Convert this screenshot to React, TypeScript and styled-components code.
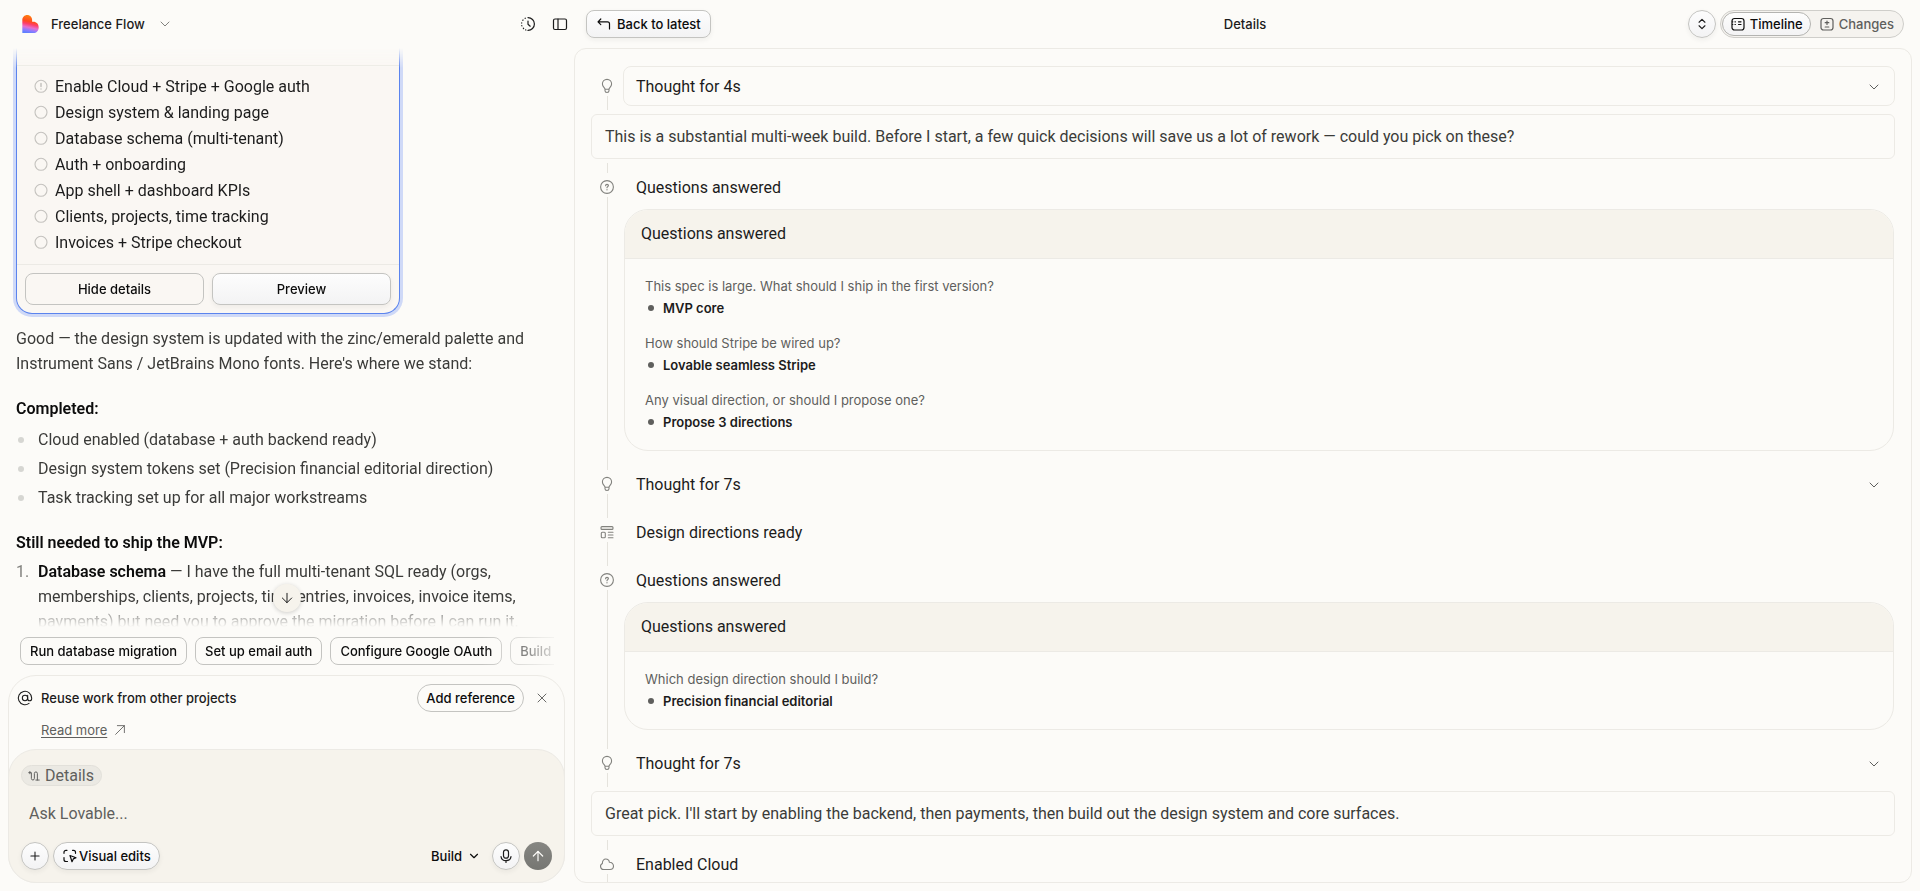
import React from "react";
import styled, { createGlobalStyle, css } from "styled-components";
import { ArrowDown, ArrowUp, AtSign, ChevronDown, ChevronsUpDown, Plus, X } from "lucide-react";

const color = {
  page: "#fcfbf8",
  sand: "#f6f3ec",
  card: "#faf7f3",
  ink: "#1c1c1c",
  body: "#3b3b39",
  muted: "#5f5f5d",
  icon: "#82827e",
  line: "#eceae5",
  edge: "#c4c4c1",
};

const bodyFont = `Roboto, "Liberation Sans", sans-serif`;
const uiFont = `Inter, "Liberation Sans", sans-serif`;

const GlobalStyle = createGlobalStyle`
  *, *::before, *::after { box-sizing: border-box; }
  body { margin: 0; background: ${color.page}; color: ${color.ink}; font: 400 16px/24px ${bodyFont}; }
  button, textarea { margin: 0; padding: 0; border: 0; background: none; color: inherit; font: inherit; }
  button { cursor: pointer; }
  h1, h2, h3, p, ul, ol { margin: 0; padding: 0; font: inherit; list-style: none; }
  svg { display: block; flex: none; }
`;

const Shell = styled.div`
  display: flex;
  height: 100vh;
  overflow: hidden;
`;

/* ---------- shared controls ---------- */

const uiText = css`
  font: 500 13px/20px ${uiFont};
  color: #0c0c0c;
  white-space: nowrap;
`;

const raised = css`
  background: linear-gradient(#fdfdfd, #f3f3f4);
  border: 1px solid ${color.edge};
  box-shadow: 0 2px 5px rgba(28, 28, 28, 0.06);
`;

const Button = styled.button<{ $raised?: boolean; $round?: boolean; $pad?: number; $gap?: number }>`
  ${uiText}
  display: flex;
  flex: none;
  align-items: center;
  justify-content: center;
  gap: ${(p) => p.$gap ?? 5}px;
  height: 28px;
  padding: 0 ${(p) => p.$pad ?? 9}px;
  border: 1px solid ${color.edge};
  border-radius: ${(p) => (p.$round ? 14 : 8)}px;
  ${(p) => p.$raised && raised}
`;

const RoundButton = styled.button<{ $tone?: "raised" | "dark" | "plain" }>`
  display: flex;
  flex: none;
  align-items: center;
  justify-content: center;
  width: 28px;
  height: 28px;
  border-radius: 50%;
  ${(p) => (!p.$tone || p.$tone === "raised") && raised}
  ${(p) => p.$tone === "dark" && "background: linear-gradient(#868682, #767672); color: #fcfbf8;"}
`;

const IconButton = styled.button`
  display: flex;
`;

/* ---------- icons ---------- */

type IconProps = { size?: number; width?: number; children: React.ReactNode };
const Icon = ({ size = 16, width = 1, children }: IconProps) => (
  <svg width={size} height={size} viewBox="0 0 16 16" fill="none" stroke="currentColor" strokeWidth={width} strokeLinecap="round" strokeLinejoin="round" aria-hidden="true">
    {children}
  </svg>
);

const Logo = () => (
  <svg width="17" height="18" viewBox="0 0 50 55" aria-hidden="true">
    <defs>
      <linearGradient id="logo-base" x1="0.6" y1="0" x2="0.4" y2="1">
        <stop offset="0" stopColor="#ff8a0c" />
        <stop offset="0.38" stopColor="#ff4a22" />
        <stop offset="0.52" stopColor="#fd3f6a" />
        <stop offset="0.7" stopColor="#e56fd0" />
        <stop offset="0.86" stopColor="#8f7bff" />
        <stop offset="1" stopColor="#5f80ff" />
      </linearGradient>
    </defs>
    <path fill="url(#logo-base)" d="M15 0c8.500 0 15 6.500 15 15v6h4c9 0 16 7 16 17s-7 17-16 17H0V15C0 6.500 6.500 0 15 0z" />
  </svg>
);

const HistoryIcon = () => (
  <Icon width={1.2}>
    <path d="M8 1.600a6.400 6.400 0 0 1 0 12.800" />
    <path d="M5.400 2.200l-.3.100M3 4l-.2.300M1.700 6.800v.3M1.800 9.600l.1.300M3.300 12.200l.3.300M5.600 13.900l.3.100" />
    <path d="M8 5v3.200l2.200 2" />
  </Icon>
);
const SidebarIcon = () => (
  <Icon width={1.2}>
    <rect x="1.500" y="3" width="13" height="10.500" rx="1.500" />
    <path d="M6 3v10.500" />
  </Icon>
);
const BackIcon = () => (
  <Icon width={1.200}>
    <path d="M4.800 3L2 5.800l2.800 2.800M2 5.800h9.500c1.400 0 2 .8 2 2V13" />
  </Icon>
);
const TimelineIcon = () => (
  <Icon width={1.200}>
    <rect x="2" y="2.500" width="12" height="11.500" rx="2.500" />
    <path d="M5 5.800h.4M5 8.500h.4M8.500 5.800H11M8.500 8.500H11M2.500 5.800h.3M2.500 8.500h.3" />
  </Icon>
);
const ChangesIcon = () => (
  <Icon width={1.200}>
    <rect x="2" y="2.500" width="12" height="11.500" rx="2.500" />
    <path d="M8 5v3.500M6.200 6.700h3.600M6.200 11h3.600" />
  </Icon>
);
const TaskIcon = ({ alert }: { alert?: boolean }) => (
  <Icon width={1.100}>
    <circle cx="8" cy="8.300" r="6" />
    {alert && <path d="M8 5.400v3.200M8 10.900v.2" strokeWidth="1.500" />}
  </Icon>
);
const BulbIcon = () => (
  <Icon width={1.100}>
    <path d="M6 11.200c0-1.200-2.600-2.300-2.600-5.200a4.600 4.600 0 0 1 9.200 0c0 2.900-2.600 4-2.600 5.200zM6 11.200v1.600c0 1 .8 1.700 2 1.700s2-.7 2-1.700v-1.600" />
  </Icon>
);
const QuestionIcon = () => (
  <Icon width={1.100}>
    <circle cx="8" cy="8" r="6.400" />
    <path d="M6.600 6.700c0-.8.6-1.400 1.400-1.400s1.400.5 1.400 1.300c0 1-1.400 1.100-1.400 2.100M8 10.700v.1" strokeWidth="1.200" />
  </Icon>
);
const LayoutIcon = () => (
  <Icon width={1.100}>
    <rect x="2" y="2.500" width="12" height="3" rx="1" fill="#dcdbd7" />
    <rect x="2.300" y="8.200" width="4" height="5.600" rx="1" />
    <path d="M9.300 8.200H14M9.300 11H14M9.300 13.800H14" />
  </Icon>
);
const CloudIcon = () => (
  <Icon width={1.100}>
    <path d="M4.800 13.500a3.200 3.200 0 0 1-1.400-6.100C3.300 4.800 4.800 3 6.800 3c1.900 0 3.300 1.200 3.600 3.300 2.400-.1 4.100 1.600 4.100 3.700 0 2-1.500 3.500-3.500 3.500z" />
  </Icon>
);
const RouteIcon = () => (
  <Icon size={12} width={1.300}>
    <path d="M1 3.500h3.500v7.800a2 2 0 0 0 4 0V4.600a2 2 0 0 1 4 0v8.800M10.500 13.400H15M2.500 2v3" />
  </Icon>
);
const VisualIcon = () => (
  <Icon width={1.200}>
    <path d="M5 2.300H4A2 2 0 0 0 2 4.300v1M10.500 2.300h1a2 2 0 0 1 2 2v1M2 9.500v2a2 2 0 0 0 2 2h1.500" />
    <path d="M8 7.500l6 2.200-2.700 1.200L10 13.700z" />
  </Icon>
);
const MicIcon = () => (
  <Icon width={1.200}>
    <rect x="5.500" y="1.800" width="5" height="8.400" rx="2.500" />
    <path d="M3 8.500c.3 2.500 2.300 4.200 5 4.200s4.700-1.700 5-4.200M8 12.700v1.800" />
  </Icon>
);
const OutIcon = () => (
  <Icon size={14}>
    <path d="M3 13L13 3M5 3h8v8" />
  </Icon>
);

/* ---------- left: chat ---------- */

const ChatColumn = styled.section`
  display: flex;
  flex-direction: column;
  flex: 0 0 574px;
  min-width: 0;
`;

const ChatHeader = styled.header`
  display: flex;
  align-items: center;
  justify-content: space-between;
  flex: none;
  height: 48px;
  padding: 0 6px 0 22px;
`;

const ProjectButton = styled.button`
  ${uiText}
  display: flex;
  align-items: center;
  gap: 12px;
  color: ${color.ink};
  svg:last-child { color: ${color.icon}; }
`;

const HeaderTools = styled.div`
  display: flex;
  gap: 16px;
`;

const ChatBody = styled.div`
  position: relative;
  flex: 1;
  min-height: 0;
`;

const ChatScroll = styled.div`
  height: 100%;
  padding: 0 16px;
  overflow: hidden;
  color: ${color.body};
  line-height: 25px;
  mask-image: linear-gradient(transparent, #000 20px, #000 calc(100% - 26px), transparent);
`;

const ScrollDown = styled.div`
  position: absolute;
  bottom: 15px;
  left: 50%;
  transform: translateX(-50%);
  button {
    background: ${color.sand};
    box-shadow: 0 1px 4px rgba(28, 28, 28, 0.2);
  }
`;

const TaskCard = styled.article`
  width: 384px;
  margin-bottom: 12px;
  border: 1px solid #5b84ee;
  border-top: 0;
  border-radius: 0 0 16px 16px;
  background: ${color.card};
  box-shadow: 0 0 0 3px #cfd9f7;
  color: ${color.ink};
`;

const TaskCardTop = styled.div`
  height: 18px;
  border-bottom: 1px solid ${color.line};
`;

const TaskList = styled.ul`
  padding: 7px 16px 9px;
`;

const Task = styled.li`
  display: flex;
  align-items: center;
  gap: 6px;
  height: 26px;
  svg { color: #c4c2be; }
`;

const TaskActions = styled.div`
  display: grid;
  grid-template-columns: 1fr 1fr;
  gap: 8px;
  padding: 8px;
  border-top: 1px solid ${color.line};
  button { height: 32px; }
`;

const Lead = styled.p`
  margin-bottom: 20px;
`;

const Strong = styled.strong`
  font-weight: 600;
  color: #0c0c0c;
`;

const BulletList = styled.ul`
  display: grid;
  gap: 4px;
  margin: 6px 0 20px;
`;

const Bullet = styled.li`
  display: flex;
  align-items: center;
  gap: 14px;
  padding-left: 2px;
  &::before {
    content: "";
    width: 6px;
    height: 6px;
    border-radius: 50%;
    background: #d6d6d2;
  }
`;

const Steps = styled.ol`
  margin-top: 4px;
`;

const Step = styled.li`
  display: grid;
  grid-template-columns: 22px 1fr;
`;

const StepNumber = styled.span`
  color: ${color.icon};
`;

const Suggestions = styled.div`
  display: flex;
  flex: none;
  gap: 8px;
  margin: 10px 20px;
  overflow: hidden;
  mask-image: linear-gradient(90deg, #000 calc(100% - 72px), transparent calc(100% + 12px));
`;

const Composer = styled.div`
  flex: none;
  margin: 0 9px 8px 8px;
  border: 1px solid ${color.line};
  border-radius: 28px;
`;

const Notice = styled.div`
  display: grid;
  grid-template-columns: 16px 1fr auto auto;
  align-items: center;
  column-gap: 8px;
  row-gap: 8px;
  padding: 8px 8px 9px;
`;

const NoticeText = styled.span`
  ${uiText}
  color: ${color.ink};
`;

const NoticeActions = styled.div`
  display: flex;
  gap: 4px;
  grid-column: 3 / 5;
  color: ${color.muted};
`;

const ReadMore = styled.a`
  display: flex;
  align-items: center;
  gap: 6px;
  grid-column: 2 / 5;
  font: 400 13px/20px ${uiFont};
  color: ${color.muted};
  text-decoration: none;
  span { text-decoration: underline; text-underline-offset: 2px; }
`;

const Prompt = styled.form`
  margin: 0 -1px -1px;
  padding: 15px 12px 12px;
  border: 1px solid ${color.line};
  border-radius: 28px;
  background: ${color.sand};
`;

const ContextChip = styled.button`
  display: flex;
  align-items: center;
  gap: 5px;
  height: 21px;
  padding: 0 7px 0 6px;
  border: 1px solid #e2e0da;
  border-radius: 11px;
  background: #ebe9e3;
  color: ${color.muted};
  line-height: 19px;
`;

const PromptInput = styled.textarea`
  display: block;
  width: 100%;
  height: 24px;
  margin: 16px 0;
  padding: 0 8px;
  outline: 0;
  resize: none;
  overflow: hidden;
  &::placeholder { color: ${color.muted}; opacity: 1; }
`;

const PromptBar = styled.div`
  display: flex;
  gap: 4px;
`;

const ModeButton = styled.button`
  ${uiText}
  display: flex;
  align-items: center;
  gap: 5px;
  margin-left: auto;
  padding: 0 7px;
`;

/* ---------- right: details ---------- */

const DetailsColumn = styled.main`
  display: flex;
  flex-direction: column;
  flex: 1;
  min-width: 0;
  padding: 0 8px 8px 0;
`;

const DetailsHeader = styled.header`
  display: grid;
  grid-template-columns: 1fr auto 1fr;
  align-items: center;
  flex: none;
  height: 48px;
  padding: 0 8px 0 12px;
`;

const HeaderStart = styled.div`
  display: flex;
`;

const Title = styled.h1`
  font: 500 13px/20px ${uiFont};
`;

const HeaderActions = styled.div`
  display: flex;
  justify-content: flex-end;
  gap: 4px;
`;

const Segmented = styled.div`
  display: flex;
  height: 28px;
  padding: 1px;
  border: 1px solid #cfceca;
  border-radius: 14px;
  background: #f5f3ef;
`;

const Segment = styled.button<{ $active?: boolean }>`
  ${uiText}
  display: flex;
  align-items: center;
  gap: 4px;
  padding: 0 7px;
  border-radius: 12px;
  border: 1px solid transparent;
  color: ${color.muted};
  ${(p) => p.$active && raised}
  ${(p) => p.$active && "color: #0c0c0c; border-color: #b4b4b1; box-shadow: none;"}
`;

const Panel = styled.div`
  flex: 1;
  min-height: 0;
  padding: 17px 16px 0;
  overflow: hidden;
  border: 1px solid ${color.line};
  border-radius: 12px;
`;

const Entry = styled.section`
  display: grid;
  grid-template-columns: 16px minmax(0, 1fr);
  column-gap: 8px;
  padding-left: 8px;
`;

const Rail = styled.div<{ $first?: boolean; $short?: boolean }>`
  display: flex;
  flex-direction: column;
  align-items: center;
  color: ${color.icon};
  &::before, &::after { content: ""; width: 1px; background: #e5e3dd; }
  &::before { height: 6px; visibility: ${(p) => (p.$first ? "hidden" : "visible")}; }
  &::after { flex: 1; margin-bottom: ${(p) => (p.$short ? 4 : 0)}px; }
`;

const RailIcon = styled.span`
  display: flex;
  align-items: center;
  height: 24px;
  padding-top: 4px;
`;

const EntryBody = styled.div`
  padding-bottom: 8px;
`;

const entryHead = css`
  display: flex;
  align-items: center;
  justify-content: space-between;
  width: 100%;
  height: 40px;
  padding: 2px 12px 0;
  border: 1px solid transparent;
`;

const EntryTitle = styled.h2`
  ${entryHead}
`;

const EntryToggle = styled.button<{ $outlined?: boolean }>`
  ${entryHead}
  border-radius: 8px;
  border-color: ${(p) => (p.$outlined ? color.line : "transparent")};
  svg { color: ${color.muted}; }
`;

const Message = styled.div`
  display: flex;
  flex-direction: column;
  color: ${color.body};
  p {
    padding: 10px 13px 9px;
    border: 1px solid ${color.line};
    border-radius: 6px;
  }
  &::after {
    content: "";
    width: 1px;
    height: 4px;
    margin: 4px 0 0 16px;
    background: #e5e3dd;
  }
`;

const AnswerCard = styled.div`
  margin: 2px 1px 5px;
  overflow: hidden;
  border: 1px solid ${color.line};
  border-radius: 24px;
`;

const AnswerHead = styled.h3`
  padding: 12px 16px;
  border-bottom: 1px solid ${color.line};
  background: ${color.sand};
`;

const Answers = styled.div`
  display: grid;
  gap: 15px;
  padding: 17px 20px 18px;
  font: 400 13px/20px ${uiFont};
`;

const Question = styled.p`
  margin-bottom: 2px;
  color: ${color.muted};
`;

const Answer = styled.p`
  display: flex;
  align-items: center;
  gap: 9px;
  padding-left: 3px;
  font-weight: 600;
  &::before {
    content: "";
    width: 6px;
    height: 6px;
    border-radius: 50%;
    background: ${color.muted};
  }
`;

type EntryProps = { icon: React.ReactNode; title: string; toggle?: boolean; first?: boolean; beforeMessage?: boolean; children?: React.ReactNode };

const TimelineEntry = ({ icon, title, toggle, first, beforeMessage, children }: EntryProps) => (
  <Entry>
    <Rail $first={first} $short={beforeMessage}>
      <RailIcon>{icon}</RailIcon>
    </Rail>
    <EntryBody>
      {toggle ? (
        <EntryToggle type="button" $outlined={first}>
          {title}
          <ChevronDown size={16} strokeWidth={1.5} />
        </EntryToggle>
      ) : (
        <EntryTitle>{title}</EntryTitle>
      )}
      {children}
    </EntryBody>
  </Entry>
);

const Answered = ({ items }: { items: [string, string][] }) => (
  <AnswerCard>
    <AnswerHead>Questions answered</AnswerHead>
    <Answers>
      {items.map(([question, answer]) => (
        <div key={question}>
          <Question>{question}</Question>
          <Answer>{answer}</Answer>
        </div>
      ))}
    </Answers>
  </AnswerCard>
);

const tasks = [
  "Enable Cloud + Stripe + Google auth",
  "Design system & landing page",
  "Database schema (multi-tenant)",
  "Auth + onboarding",
  "App shell + dashboard KPIs",
  "Clients, projects, time tracking",
  "Invoices + Stripe checkout",
];

const completed = [
  "Cloud enabled (database + auth backend ready)",
  "Design system tokens set (Precision financial editorial direction)",
  "Task tracking set up for all major workstreams",
];

const suggestions = ["Run database migration", "Set up email auth", "Configure Google OAuth", "Build dashboard"];

const Chat = () => (
  <ChatColumn>
    <ChatHeader>
      <ProjectButton type="button">
        <Logo />
        Freelance Flow
        <ChevronDown size={16} strokeWidth={1.5} />
      </ProjectButton>
      <HeaderTools>
        <IconButton type="button" aria-label="History"><HistoryIcon /></IconButton>
        <IconButton type="button" aria-label="Toggle sidebar"><SidebarIcon /></IconButton>
      </HeaderTools>
    </ChatHeader>

    <ChatBody>
      <ChatScroll>
        <TaskCard>
          <TaskCardTop />
          <TaskList>
            {tasks.map((task, i) => (
              <Task key={task}><TaskIcon alert={i === 0} />{task}</Task>
            ))}
          </TaskList>
          <TaskActions>
            <Button type="button">Hide details</Button>
            <Button type="button" $raised>Preview</Button>
          </TaskActions>
        </TaskCard>
        <Lead>
          Good — the design system is updated with the zinc/emerald palette and Instrument Sans / JetBrains Mono fonts. Here's where we stand:
        </Lead>
        <p><Strong>Completed:</Strong></p>
        <BulletList>
          {completed.map((item) => <Bullet key={item}>{item}</Bullet>)}
        </BulletList>
        <p><Strong>Still needed to ship the MVP:</Strong></p>
        <Steps>
          <Step>
            <StepNumber>1.</StepNumber>
            <span>
              <Strong>Database schema</Strong> — I have the full multi-tenant SQL ready (orgs, memberships, clients, projects, time entries, invoices, invoice items, payments) but need you to approve the migration before I can run it.
            </span>
          </Step>
        </Steps>
      </ChatScroll>
      <ScrollDown>
        <RoundButton type="button" $tone="plain" aria-label="Scroll to latest"><ArrowDown size={16} strokeWidth={1.5} /></RoundButton>
      </ScrollDown>
    </ChatBody>

    <Suggestions>
      {suggestions.map((label) => <Button type="button" key={label}>{label}</Button>)}
    </Suggestions>

    <Composer>
      <Notice>
        <AtSign size={16} strokeWidth={1.6} />
        <NoticeText>Reuse work from other projects</NoticeText>
        <NoticeActions>
          <Button type="button" $round $pad={8}>Add reference</Button>
          <RoundButton type="button" $tone="plain" aria-label="Dismiss"><X size={16} strokeWidth={1.4} /></RoundButton>
        </NoticeActions>
        <ReadMore href="#"><span>Read more</span><OutIcon /></ReadMore>
      </Notice>
      <Prompt onSubmit={(e) => e.preventDefault()}>
        <ContextChip type="button"><RouteIcon />Details</ContextChip>
        <PromptInput rows={1} placeholder="Ask Lovable..." aria-label="Ask Lovable" />
        <PromptBar>
          <RoundButton type="button" aria-label="Add"><Plus size={14} strokeWidth={1.8} /></RoundButton>
          <Button type="button" $raised $round $pad={8} $gap={1}><VisualIcon />Visual edits</Button>
          <ModeButton type="button">Build<ChevronDown size={14} strokeWidth={2} /></ModeButton>
          <RoundButton type="button" aria-label="Dictate"><MicIcon /></RoundButton>
          <RoundButton type="submit" $tone="dark" aria-label="Send"><ArrowUp size={16} strokeWidth={1.8} /></RoundButton>
        </PromptBar>
      </Prompt>
    </Composer>
  </ChatColumn>
);

const Details = () => (
  <DetailsColumn>
    <DetailsHeader>
      <HeaderStart>
        <Button type="button" $raised><BackIcon />Back to latest</Button>
      </HeaderStart>
      <Title>Details</Title>
      <HeaderActions>
        <RoundButton type="button" aria-label="Expand all"><ChevronsUpDown size={14} strokeWidth={2} /></RoundButton>
        <Segmented>
          <Segment type="button" $active><TimelineIcon />Timeline</Segment>
          <Segment type="button"><ChangesIcon />Changes</Segment>
        </Segmented>
      </HeaderActions>
    </DetailsHeader>
    <Panel>
      <TimelineEntry icon={<BulbIcon />} title="Thought for 4s" toggle first beforeMessage />
      <Message>
        <p>This is a substantial multi-week build. Before I start, a few quick decisions will save us a lot of rework — could you pick on these?</p>
      </Message>
      <TimelineEntry icon={<QuestionIcon />} title="Questions answered">
        <Answered
          items={[
            ["This spec is large. What should I ship in the first version?", "MVP core"],
            ["How should Stripe be wired up?", "Lovable seamless Stripe"],
            ["Any visual direction, or should I propose one?", "Propose 3 directions"],
          ]}
        />
      </TimelineEntry>
      <TimelineEntry icon={<BulbIcon />} title="Thought for 7s" toggle />
      <TimelineEntry icon={<LayoutIcon />} title="Design directions ready" />
      <TimelineEntry icon={<QuestionIcon />} title="Questions answered">
        <Answered items={[["Which design direction should I build?", "Precision financial editorial"]]} />
      </TimelineEntry>
      <TimelineEntry icon={<BulbIcon />} title="Thought for 7s" toggle beforeMessage />
      <Message>
        <p>Great pick. I'll start by enabling the backend, then payments, then build out the design system and core surfaces.</p>
      </Message>
      <TimelineEntry icon={<CloudIcon />} title="Enabled Cloud" />
    </Panel>
  </DetailsColumn>
);

export default function App() {
  return (
    <Shell>
      <GlobalStyle />
      <Chat />
      <Details />
    </Shell>
  );
}
